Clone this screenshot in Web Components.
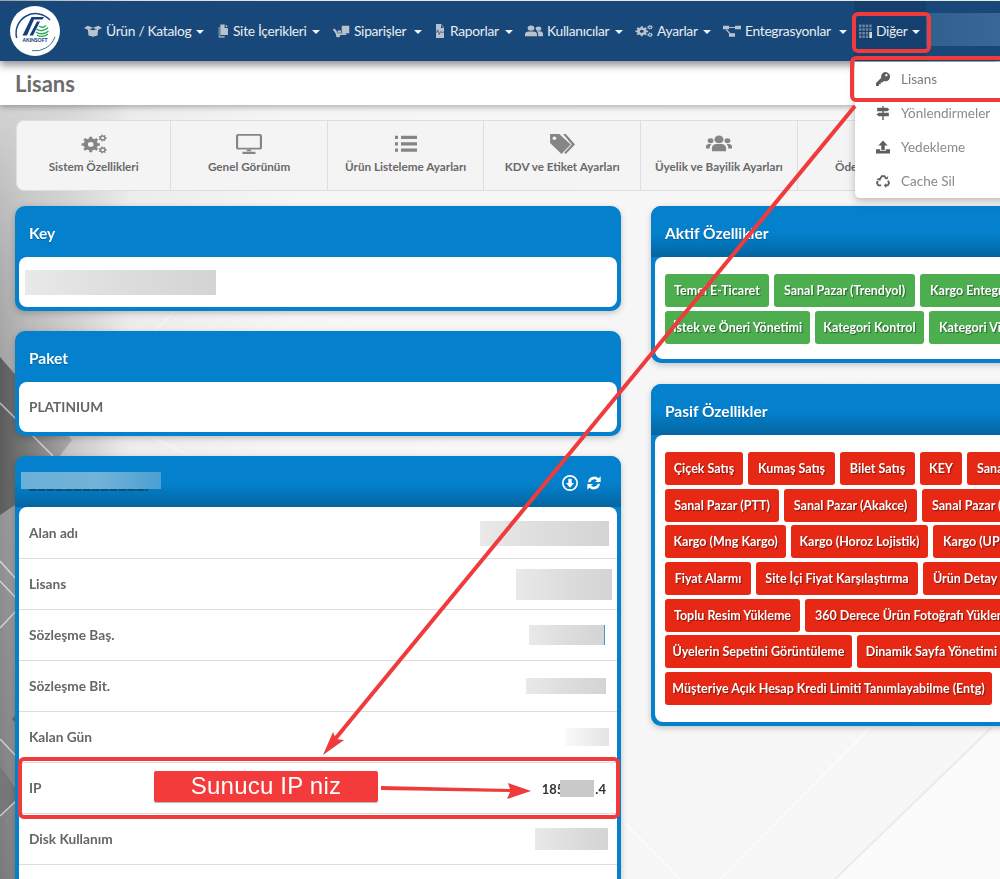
<!DOCTYPE html>
<html lang="tr">
<head>
<meta charset="utf-8">
<title>Lisans</title>
<style>
html,body{margin:0;padding:0;height:879px;overflow:hidden;background:#f5f5f5;font-family:Lato,"Open Sans",sans-serif}
</style>
</head>
<body>
<license-page>
  <page-backdrop></page-backdrop>
  <app-navbar>
    <nav-item icon="box" iw="18" tw="85">Ürün / Katalog</nav-item>
    <nav-item icon="copy" iw="13" tw="74">Site İçerikleri</nav-item>
    <nav-item icon="dolly" iw="18" tw="55">Siparişler</nav-item>
    <nav-item icon="report" iw="12" tw="50">Raporlar</nav-item>
    <nav-item icon="users2" iw="18" tw="63">Kullanıcılar</nav-item>
    <nav-item icon="cogs" iw="18" tw="41">Ayarlar</nav-item>
    <nav-item icon="diagram" iw="18" tw="89">Entegrasyonlar</nav-item>
    <nav-item icon="grid" iw="13" tw="31" active>Diğer</nav-item>
    <redact-block w="74" h="33" tone="nav"></redact-block>
  </app-navbar>
  <title-bar>Lisans</title-bar>
  <tab-bar>
    <tab-item icon="cogs" iw="26" ih="22" lead>Sistem Özellikleri</tab-item>
    <tab-item icon="desktop" iw="26" ih="22">Genel Görünüm</tab-item>
    <tab-item icon="list" iw="24" ih="22">Ürün Listeleme Ayarları</tab-item>
    <tab-item icon="tags" iw="26" ih="24">KDV ve Etiket Ayarları</tab-item>
    <tab-item icon="users" iw="26" ih="22">Üyelik ve Bayilik Ayarları</tab-item>
    <tab-item icon="none" iw="26" ih="22">Ödeme Ayarları</tab-item>
  </tab-bar>
  <main-grid>
    <panel-column>
      <info-panel>
        <span slot="title">Key</span>
        <info-row><redact-block w="191" h="25" inset="left" shift="-4"></redact-block></info-row>
      </info-panel>
      <info-panel>
        <span slot="title">Paket</span>
        <info-row label="PLATINIUM"></info-row>
      </info-panel>
      <info-panel shaded>
        <title-redaction slot="title"></title-redaction>
        <ui-icon slot="actions" name="circledown" w="16" h="16"></ui-icon>
        <ui-icon slot="actions" name="sync" w="16" h="16"></ui-icon>
        <info-row label="Alan adı" divided lead><redact-block w="129" h="25" shift="-2"></redact-block></info-row>
        <info-row label="Lisans" divided><redact-block w="96" h="31" shift="-5"></redact-block></info-row>
        <info-row label="Sözleşme Baş." divided><redact-block w="75" h="20" shift="3" tone="sliver"></redact-block></info-row>
        <info-row label="Sözleşme Bit." divided><redact-block w="80" h="16" shift="1"></redact-block></info-row>
        <info-row label="Kalan Gün" divided><redact-block w="44" h="18" shift="-2" tone="pale"></redact-block></info-row>
        <info-row label="IP" divided><ip-value></ip-value></info-row>
        <info-row label="Disk Kullanım" divided><redact-block w="73" h="22" shift="-1"></redact-block></info-row>
        <info-row></info-row>
      </info-panel>
    </panel-column>
    <panel-column wide>
      <info-panel shaded>
        <span slot="title">Aktif Özellikler</span>
        <tag-list>
          <tag-row>
            <tag-badge w="104">Temel E-Ticaret</tag-badge>
            <tag-badge w="141">Sanal Pazar (Trendyol)</tag-badge>
            <tag-badge w="140" start>Kargo Entegrasyonu</tag-badge>
          </tag-row>
          <tag-row>
            <tag-badge w="145">İstek ve Öneri Yönetimi</tag-badge>
            <tag-badge w="109">Kategori Kontrol</tag-badge>
            <tag-badge w="120" start>Kategori Vitrin</tag-badge>
          </tag-row>
        </tag-list>
      </info-panel>
      <info-panel shaded>
        <span slot="title">Pasif Özellikler</span>
        <tag-list roomy>
          <tag-row>
            <tag-badge tone="red" w="78">Çiçek Satış</tag-badge>
            <tag-badge tone="red" w="87">Kumaş Satış</tag-badge>
            <tag-badge tone="red" w="75">Bilet Satış</tag-badge>
            <tag-badge tone="red" w="42">KEY</tag-badge>
            <tag-badge tone="red" w="100" start>Sanal Pazar</tag-badge>
          </tag-row>
          <tag-row>
            <tag-badge tone="red" w="114">Sanal Pazar (PTT)</tag-badge>
            <tag-badge tone="red" w="133">Sanal Pazar (Akakce)</tag-badge>
            <tag-badge tone="red" w="130" start>Sanal Pazar (N11)</tag-badge>
          </tag-row>
          <tag-row>
            <tag-badge tone="red" w="121">Kargo (Mng Kargo)</tag-badge>
            <tag-badge tone="red" w="137">Kargo (Horoz Lojistik)</tag-badge>
            <tag-badge tone="red" w="121" start>Kargo (UPS Kargo)</tag-badge>
          </tag-row>
          <tag-row>
            <tag-badge tone="red" w="86">Fiyat Alarmı</tag-badge>
            <tag-badge tone="red" w="162">Site İçi Fiyat Karşılaştırma</tag-badge>
            <tag-badge tone="red" w="140" start>Ürün Detay Sayfası</tag-badge>
          </tag-row>
          <tag-row>
            <tag-badge tone="red" w="135">Toplu Resim Yükleme</tag-badge>
            <tag-badge tone="red" w="230" start>360 Derece Ürün Fotoğrafı Yükleme</tag-badge>
          </tag-row>
          <tag-row>
            <tag-badge tone="red" w="187">Üyelerin Sepetini Görüntüleme</tag-badge>
            <tag-badge tone="red" w="149">Dinamik Sayfa Yönetimi</tag-badge>
          </tag-row>
          <tag-row>
            <tag-badge tone="red" w="327">Müşteriye Açık Hesap Kredi Limiti Tanımlayabilme (Entg)</tag-badge>
          </tag-row>
        </tag-list>
      </info-panel>
    </panel-column>
  </main-grid>
  <drop-menu>
    <menu-entry icon="key" strong>Lisans</menu-entry>
    <menu-entry icon="signs">Yönlendirmeler</menu-entry>
    <menu-entry icon="upload">Yedekleme</menu-entry>
    <menu-entry icon="recycle">Cache Sil</menu-entry>
  </drop-menu>
  <note-layer></note-layer>
</license-page>
<script>
function gear(cx,cy,R,r,n,hole){
  let d='';
  const step=Math.PI*2/n;
  for(let i=0;i<n;i++){
    const a=i*step;
    const pts=[[r,a-step*.5],[r,a-step*.28],[R,a-step*.2],[R,a+step*.2],[r,a+step*.28]];
    pts.forEach((p,j)=>{
      const x=(cx+p[0]*Math.cos(p[1])).toFixed(2),y=(cy+p[0]*Math.sin(p[1])).toFixed(2);
      d+=(i===0&&j===0?'M':'L')+x+' '+y;
    });
  }
  d+='Z';
  d+=`M${cx-hole} ${cy}a${hole} ${hole} 0 1 0 ${hole*2} 0a${hole} ${hole} 0 1 0 ${-hole*2} 0Z`;
  return d;
}
const ICONS={
  none:'',
  cogs:`<path fill-rule="evenodd" d="${gear(9,12.5,8.6,6.6,8,2.6)}"/><path fill-rule="evenodd" d="${gear(20,5.5,3.8,2.9,7,1.3)}"/><path fill-rule="evenodd" d="${gear(20,18.5,3.8,2.9,7,1.3)}"/>`,
  desktop:`<path fill-rule="evenodd" d="M2 1h20a2 2 0 0 1 2 2v13a2 2 0 0 1-2 2H2a2 2 0 0 1-2-2V3a2 2 0 0 1 2-2zM2 3v13h20V3z"/><path d="M10 18h4v2h-4zM6 20.500h12V23H6z"/>`,
  list:`<path d="M1 3h3v3.500H1zM7 3h16v3.500H7zM1 10h3v3.500H1zM7 10h16v3.500H7zM1 17h3v3.500H1zM7 17h16v3.500H7z"/>`,
  tags:`<path fill-rule="evenodd" d="M1 2h8.500L20 12.500 11.500 22 1 11zM5 4.500a1.800 1.800 0 1 0 0 3.600 1.800 1.800 0 0 0 0-3.600z"/><path d="M13 2h2.500L24 12.500 15.500 22l-1.500-1.300 7-8.200z"/>`,
  users:`<circle cx="12" cy="7" r="4.200"/><path d="M5.500 20v-3.500C5.500 13.500 8 12 10 12h4c2 0 4.500 1.500 4.500 4.500V20z"/><circle cx="4.200" cy="8.500" r="2.700"/><circle cx="19.800" cy="8.500" r="2.700"/><path d="M0 17v-2.500C0 13 1.300 12 3 12h2.200c-1.200 1-1.700 2.500-1.700 4v1zM24 17v-2.500C24 13 22.700 12 21 12h-2.200c1.200 1 1.700 2.500 1.700 4v1z"/>`,
  users2:`<circle cx="8" cy="7" r="4.500"/><path d="M0 21v-3.500C0 14.500 2.300 13 4.500 13h7c2.200 0 4.500 1.500 4.500 4.500V21z"/><circle cx="18" cy="8" r="3.700"/><path d="M17.500 21v-4c0-1.800-.7-3.100-2-4.300.7-.2 1.300-.2 2-.2h2c2.300 0 4.500 1.400 4.500 4.200V21z"/>`,
  box:`<path d="M5 8l7 2.500L19 8l-1 11.500-6 2.500-6-2.500z"/><path d="M0 7l5-4 7 3.500L19 3l5 4-5 3-7-3-7 3z"/>`,
  copy:`<path d="M8 1h8v6h6v12H8z"/><path d="M18 1l4 4h-4zM5 5h1.500v16H16v2H5z"/>`,
  dolly:`<path d="M13 3h10v13H13z"/><path d="M1 9l3-1 4 8 11 0v3H6z"/><circle cx="8" cy="20" r="2.800"/><path d="M7 11h5v4H8.500z"/>`,
  report:`<path fill-rule="evenodd" d="M4 0h10l6 6v18H4zM14 1.500V7h5.500z"/><path d="M0 14h6l1.500-4 3 8 2.500-5 1 1h6" fill="none" stroke="#184a7b" stroke-width="1.300"/>`,
  diagram:`<path d="M0 3h8v6H0zM16 3h8v6h-8zM8 16h8v6H8z"/><path d="M8 5h8v2H8zM5 9l5.500 7.500-1.600 1L3.500 10z"/>`,
  grid:`<g fill="#6f87a1"><path d="M0 1h4.400v4.400H0zM6.300 1h4.400v4.400H6.300zM12.600 1h4.400v4.400h-4.400zM19 1h4.400v4.400H19zM0 7.300h4.400v4.400H0zM6.300 7.300h4.400v4.400H6.300zM12.600 7.300h4.400v4.400h-4.400zM19 7.300h4.400v4.400H19zM0 13.600h4.400V18H0zM6.300 13.600h4.400V18H6.300zM12.600 13.600h4.400V18h-4.400zM0 19.600h4.400V24H0zM6.300 19.600h4.400V24H6.300zM12.600 19.600h4.400V24h-4.400z"/></g><path fill="#d2d8df" d="M19 13.600h5V24h-5z"/>`,
  key:`<path fill-rule="evenodd" d="M16 0a8 8 0 1 1-2.700 15.500l-2.300 2.500H8v3H5v3H0v-5l9-9A8 8 0 0 1 16 0zm1.800 3.400a2 2 0 1 0 0 4 2 2 0 0 0 0-4z"/>`,
  signs:`<path d="M10.800 0h2.400v24h-2.400z"/><path d="M2 3h17.500L23 6l-3.500 3H2zM22 11.500H4.500L1 14.500l3.500 3H22z"/>`,
  upload:`<path d="M12 1l8 8.500h-5V17H9V9.500H4z"/><path d="M0 16h7v2.500h10V16h7v7H0z"/>`,
  recycle:`<g fill="none" stroke="currentColor" stroke-width="3"><path d="M6.500 9.500l3.500-6h4.500l2.700 4.500"/><path d="M20.500 11.500l2 4-2.300 4h-5"/><path d="M9 19.500H4l-2.500-4 1.800-3.500"/></g><path d="M14.500 8.500l5.500.5 1-5.500zM13.500 19.500l4 4.300v-8.500zM.5 9l5.500-2.500L7.800 12z"/>`,
  circledown:`<path fill-rule="evenodd" d="M12 0a12 12 0 1 1 0 24 12 12 0 0 1 0-24zm0 2.500a9.500 9.500 0 1 0 0 19 9.500 9.500 0 0 0 0-19z"/><path d="M9.500 5.500h5V12H18l-6 7-6-7h3.500z"/>`,
  sync:`<path d="M3 11A9.500 9.500 0 0 1 19 5l3-3v8.500h-8.500L16.500 8A6 6 0 0 0 6.500 11zM21 13A9.500 9.500 0 0 1 5 19l-3 3v-8.500h8.500L7.500 16a6 6 0 0 0 10-3z"/>`
};
function shadow(el,html){const s=el.attachShadow({mode:'open'});s.innerHTML=html;return s;}

customElements.define('ui-icon',class extends HTMLElement{
  connectedCallback(){
    if(this.shadowRoot)return;
    const w=this.getAttribute('w')||16,h=this.getAttribute('h')||w;
    const name=this.getAttribute('name');
    shadow(this,`<style>:host{display:inline-flex;flex:none;width:${w}px;height:${h}px;color:inherit}svg{width:100%;height:100%;fill:currentColor;display:block}</style><svg viewBox="0 0 24 24" preserveAspectRatio="none">${ICONS[name]||''}</svg>`);
  }
});

customElements.define('license-page',class extends HTMLElement{
  constructor(){super();shadow(this,`<style>:host{display:block;position:relative;width:1000px;height:879px;overflow:hidden;padding-top:1px;box-sizing:border-box;font-family:Lato,"Open Sans",sans-serif;color:#666}</style><slot></slot>`);}
});

customElements.define('page-backdrop',class extends HTMLElement{
  constructor(){super();shadow(this,`<style>:host{display:block;position:absolute;left:0;top:0;width:1000px;height:879px}svg{display:block}</style>
  <svg width="1000" height="879" viewBox="0 0 1000 879">
    <defs>
      <linearGradient id="base" x1="0" x2="1" y1="0" y2="0"><stop offset="0" stop-color="#a8a8a8"/><stop offset=".03" stop-color="#bdbdbd"/><stop offset=".13" stop-color="#ececec"/><stop offset=".3" stop-color="#f6f6f6"/><stop offset="1" stop-color="#f7f7f7"/></linearGradient>
      <linearGradient id="top" x1="0" x2="0" y1="0" y2="1"><stop offset="0" stop-color="#fff" stop-opacity=".5"/><stop offset=".2" stop-color="#fff" stop-opacity=".1"/><stop offset=".45" stop-color="#000" stop-opacity=".1"/><stop offset="1" stop-color="#000" stop-opacity=".28"/></linearGradient>
      <linearGradient id="fade" x1="0" x2="1" y1="0" y2="0"><stop offset="0" stop-color="#fff"/><stop offset="1" stop-color="#000"/></linearGradient>
      <mask id="fadeMask" maskUnits="userSpaceOnUse" x="0" y="105" width="120" height="774"><rect x="0" y="105" width="120" height="774" fill="url(#fade)"/></mask>
      <linearGradient id="dark" x1="0" x2="1" y1="0" y2="0"><stop offset="0" stop-color="#5c5c5c"/><stop offset="1" stop-color="#a9a9a9"/></linearGradient>
    </defs>
    <rect width="1000" height="879" fill="url(#base)"/>
    <rect width="120" height="774" y="105" fill="url(#top)" mask="url(#fadeMask)"/>
    <path d="M0 357L72 440L30 495L0 515Z" fill="url(#dark)"/>
    <path d="M0 766L20 795L0 816Z" fill="#777"/>
    <path d="M12 719L18 713V725Z" fill="#666"/>
    <g stroke="#fff" fill="none" stroke-width="1.500" opacity=".6">
      <path d="M0 403L53 456M0 561L16 579M0 581L16 598M0 628L16 611M0 739L16 756M0 816L16 801"/>
      <path d="M155 331L175 311M190 456L150 436" opacity=".6"/>
    </g>
    <path d="M837 879L993 728H1000V879Z" fill="#fbfbfb"/>
    <g stroke="#fff" fill="none" stroke-width="1.500" opacity=".7">
      <path d="M625 823L680 879M720 879L870 728"/>
    </g>
    <path d="M835 879L991 728" stroke="#ececec" stroke-width="2" fill="none"/>
  </svg>`);}
});

customElements.define('app-navbar',class extends HTMLElement{
  constructor(){super();shadow(this,`<style>
  :host{display:flex;position:relative;z-index:2;height:60px;background:#18487a;box-shadow:0 4px 8px rgba(0,0,0,.45);align-items:stretch;padding-left:10px;box-sizing:border-box;width:1000px;overflow:hidden}
  .logo{flex:none;width:50px;height:50px;margin:5px 24px 0 0}
  .items{display:flex;align-items:stretch}
  </style>
  <svg class="logo" viewBox="0 0 50 50">
    <circle cx="25" cy="25" r="25" fill="#fff"/>
    <path d="M6.700 32A19.500 19.500 0 0 1 40 14" fill="none" stroke="#1b4b85" stroke-width="1.500"/>
    <path d="M45 30.700A21 21 0 0 1 22 44.700" fill="none" stroke="#1b4b85" stroke-width=".8"/>
    <path d="M12.500 29.500L21.500 11H34L32.500 13.500H24L17 29.500Z" fill="#163f7d"/>
    <path d="M19.500 29.500L27 15.500H30L23 29.500Z" fill="#163f7d"/>
    <g fill="none" stroke="#2aa95a" stroke-width="1.300"><path d="M26.500 23C29 25.500 35 25 38 21.500"/><path d="M26 26C29 28.500 35 28.500 38.500 25"/><path d="M27 29C30 31 35 31 38 28"/><path d="M29 20C31 21.500 34 21.500 36 19.500"/></g>
    <text x="25" y="36" font-family="Lato,sans-serif" font-size="5" font-weight="900" text-anchor="middle" fill="#163f7d">AKINSOFT</text>
  </svg>
  <div class="items"><slot></slot></div>`);}
});

customElements.define('nav-item',class extends HTMLElement{
  connectedCallback(){
    if(this.shadowRoot)return;
    const iw=this.getAttribute('iw'),tw=this.getAttribute('tw'),icon=this.getAttribute('icon');
    shadow(this,`<style>
    :host{display:flex;align-items:center;flex:none;margin-right:12px;color:#e9edf1;font-size:13.800px;letter-spacing:-.3px;height:60px;position:relative}
    :host([active]){margin-left:-5px;margin-right:0;padding:0 6px 0 5px;background:#143f6e}
    ui-icon{color:#b9c2cc;margin-top:-1px}
    .t{width:${tw}px;margin-left:4px;white-space:nowrap;margin-top:-1px}
    .c{width:0;height:0;border:4px solid transparent;border-top-color:#f2f4f6;border-bottom:0;margin-left:5px;margin-top:2px}
    </style><ui-icon name="${icon}" w="${iw}" h="14"></ui-icon><span class="t"><slot></slot></span><span class="c"></span>`);
  }
});

customElements.define('title-bar',class extends HTMLElement{
  constructor(){super();shadow(this,`<style>:host{display:flex;align-items:center;position:relative;z-index:1;height:44px;background:#fff;box-shadow:0 2px 6px rgba(0,0,0,.3);padding:0 15px;box-sizing:border-box;font-size:22px;font-weight:700;color:#6d6d6d}</style><slot></slot>`);}
});

customElements.define('tab-bar',class extends HTMLElement{
  constructor(){super();shadow(this,`<style>:host{display:flex;position:relative;width:1200px;height:71px;margin:15px 0 15px 16px;box-sizing:border-box;background:#f4f4f4;border:1px solid #dedede;border-radius:8px}</style><slot></slot>`);}
});

customElements.define('tab-item',class extends HTMLElement{
  connectedCallback(){
    if(this.shadowRoot)return;
    const a=this;
    shadow(this,`<style>
    :host{display:flex;flex-direction:column;align-items:center;width:156.600px;box-sizing:border-box;border-right:1px solid #dedede;padding-top:8px;color:#696969;flex:none}
    :host([lead]){width:154.300px}
    ui-icon{color:#858585}
    .i{height:29px;display:flex;align-items:center}
    .l{font-size:11.700px;font-weight:700;margin-top:1px;white-space:nowrap}
    </style><div class="i"><ui-icon name="${a.getAttribute('icon')}" w="${a.getAttribute('iw')}" h="${a.getAttribute('ih')}"></ui-icon></div><div class="l"><slot></slot></div>`);
  }
});

customElements.define('main-grid',class extends HTMLElement{
  constructor(){super();shadow(this,`<style>:host{display:grid;grid-template-columns:606px 606px;column-gap:30px;padding:0 0 0 15px;width:1272px;box-sizing:border-box;position:relative;align-items:start}</style><slot></slot>`);}
});

customElements.define('panel-column',class extends HTMLElement{
  constructor(){super();shadow(this,`<style>:host{display:flex;flex-direction:column;gap:20px;min-width:0}:host([wide]){gap:21px}</style><slot></slot>`);}
});

customElements.define('info-panel',class extends HTMLElement{
  constructor(){super();shadow(this,`<style>
  :host{display:block;background:#0480cc;border-radius:10px;box-shadow:0 2px 6px rgba(0,0,0,.22);padding:0 4px 4px}
  header{height:51px;box-sizing:border-box;margin:0 -4px;padding:3px 19px 0 14px;display:flex;align-items:center;justify-content:space-between;color:#fff;font-size:15.500px;font-weight:700;border-radius:10px 10px 0 0;text-shadow:0 1px 1px rgba(0,0,0,.25)}
  :host([shaded]) header{background:linear-gradient(#0480cc 55%,#03659f)}
  .a{display:flex;gap:8px;color:#fff;margin-top:-1px}
  .b{background:#fff;border-radius:8px;overflow:hidden}
  </style><header><div><slot name="title"></slot></div><div class="a"><slot name="actions"></slot></div></header><div class="b"><slot></slot></div>`);}
});

customElements.define('title-redaction',class extends HTMLElement{
  constructor(){super();shadow(this,`<style>
  :host{display:block;margin:-4px 0 0 -8px;width:140px}
  .k{height:17px;background:linear-gradient(90deg,#6bb0d8,#72b3d8 55%,#4c9fd2)}
  .s{height:2px;margin-left:8px;width:119px;background:repeating-linear-gradient(90deg,rgba(15,45,70,.55) 0 7px,rgba(15,45,70,.25) 7px 9px)}
  </style><div class="k"></div><div class="s"></div>`);}
});

customElements.define('info-row',class extends HTMLElement{
  connectedCallback(){
    if(this.shadowRoot)return;
    shadow(this,`<style>
    :host{display:flex;align-items:center;justify-content:space-between;height:50px;box-sizing:border-box;padding:0 10px;font-size:13.700px;font-weight:700;color:#666}
    :host([divided]){height:51px;border-bottom:1px solid #dddddd}
    :host([lead]){height:52px;padding-top:1px}
    .l{white-space:nowrap;margin-top:-2px}
    </style><span class="l">${this.getAttribute('label')||''}</span><slot></slot>`);
  }
});

customElements.define('redact-block',class extends HTMLElement{
  connectedCallback(){
    if(this.shadowRoot)return;
    const w=this.getAttribute('w'),h=this.getAttribute('h'),sh=+(this.getAttribute('shift')||0);
    const tone=this.getAttribute('tone');
    const inset=this.getAttribute('inset')==='left';
    let bg='linear-gradient(90deg,#e9e9e9,#dcdcdc 55%,#d4d4d4)';
    if(tone==='pale')bg='linear-gradient(90deg,#fafafa,#e4e4e4)';
    if(tone==='nav')bg='linear-gradient(90deg,#30608e,#3a6896)';
    const extra=tone==='sliver'?'box-shadow:1px 0 0 #4a90d9;':'';
    const m=tone==='nav'?`margin:12px 0 0 0;align-self:flex-start;`:(inset?`margin-left:${sh}px;margin-right:auto;order:-1;`:`margin-right:${sh}px;`);
    shadow(this,`<style>:host{display:block;flex:none;width:${w}px;height:${h}px;background:${bg};${m}${extra}}</style>`);
  }
});

customElements.define('ip-value',class extends HTMLElement{
  constructor(){super();shadow(this,`<style>
  :host{display:flex;align-items:center;font-size:13px;font-weight:700;color:#333;margin-right:1px;margin-top:1px}
  .r{width:34px;height:17px;background:#c9c9c9;margin:0 1px 0 -4px}
  </style><span>185</span><span class="r"></span><span>.4</span>`);}
});

customElements.define('tag-list',class extends HTMLElement{
  constructor(){super();shadow(this,`<style>:host{display:flex;flex-direction:column;gap:3.670px;padding:17px 10px 15.330px}:host([roomy]){padding-bottom:17px}</style><slot></slot>`);}
});
customElements.define('tag-row',class extends HTMLElement{
  constructor(){super();shadow(this,`<style>:host{display:flex;gap:5px;height:33px}</style><slot></slot>`);}
});
customElements.define('tag-badge',class extends HTMLElement{
  connectedCallback(){
    if(this.shadowRoot)return;
    shadow(this,`<style>
    :host{display:flex;flex:none;align-items:center;justify-content:center;width:${this.getAttribute('w')}px;height:33px;box-sizing:border-box;border-radius:3px;background:#4cae4f;color:#fff;font-size:12.500px;font-weight:700;white-space:nowrap;text-shadow:1px 1px 1px rgba(0,0,0,.45);overflow:hidden}
    :host([tone=red]){background:#e62814}
    :host([start]){justify-content:flex-start;padding-left:10px}
    </style><slot></slot>`);
  }
});

customElements.define('drop-menu',class extends HTMLElement{
  constructor(){super();shadow(this,`<style>:host{display:block;position:absolute;z-index:3;left:855px;top:62px;width:220px;background:#fff;border-radius:0 0 5px 5px;box-shadow:0 3px 8px rgba(0,0,0,.25)}</style><slot></slot>`);}
});
customElements.define('menu-entry',class extends HTMLElement{
  connectedCallback(){
    if(this.shadowRoot)return;
    shadow(this,`<style>
    :host{display:flex;align-items:center;height:34px;padding-left:21px;font-size:13.500px;color:#8a8a8a;white-space:nowrap}
    :host([strong]){color:#7b7b7b}
    ui-icon{color:#5f5f5f;margin-right:11px}
    </style><ui-icon name="${this.getAttribute('icon')}" w="14" h="14"></ui-icon><slot></slot>`);
  }
});

customElements.define('note-layer',class extends HTMLElement{
  constructor(){super();shadow(this,`<style>
  :host{display:block;position:absolute;z-index:5;left:0;top:0;width:1000px;height:879px;pointer-events:none}
  svg{position:absolute;left:0;top:0}
  .label{position:absolute;left:154px;top:771px;width:224px;height:31px;background:#f43b3b;border-radius:2px;color:#fff;font:24px/29px "Liberation Sans",Arial,sans-serif;letter-spacing:.2px;text-align:center;box-shadow:0 1px 1px rgba(0,0,0,.3)}
  </style>
  <svg width="1000" height="879" viewBox="0 0 1000 879">
    <g fill="none" stroke="#ef3b3b" stroke-width="4">
      <rect x="854" y="14" width="75" height="37" rx="4"/>
      <rect x="852" y="58" width="160" height="42" rx="4"/>
      <rect x="20" y="759" width="598" height="58" rx="4"/>
      <path d="M855 106L331 744"/>
    </g>
    <path d="M323 755L333 732L336 739L344 740Z" fill="#ef3b3b"/>
    <path d="M381 786L510 789L508 783L531 791L507 799L510 792L381 790Z" fill="#ef3b3b"/>
  </svg>
  <div class="label">Sunucu IP niz</div>`);}
});
</script>
</body>
</html>
